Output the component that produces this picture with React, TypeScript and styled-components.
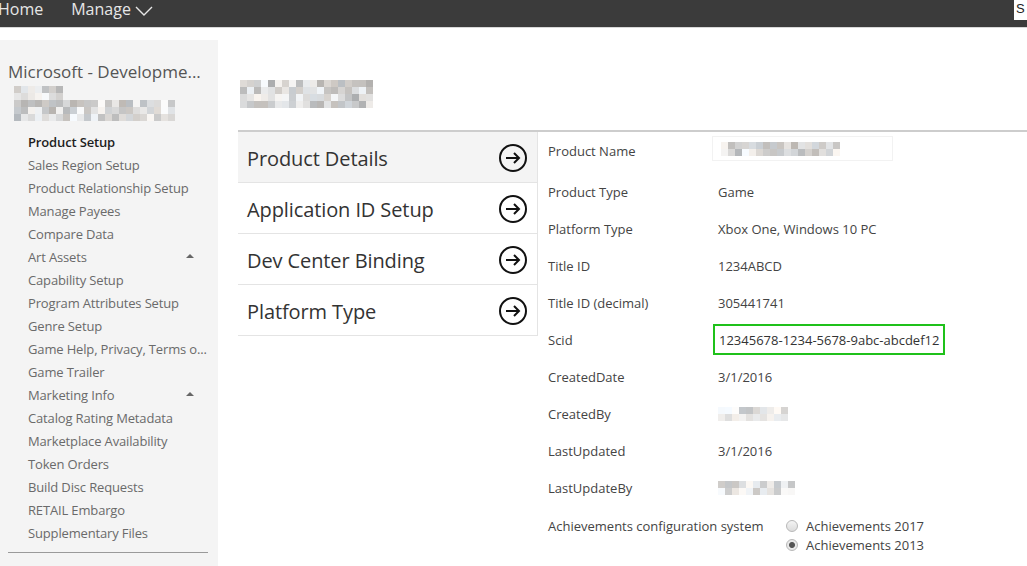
import styled, { createGlobalStyle } from "styled-components";

const GlobalStyle = createGlobalStyle`
    html, body {
        margin: 0;
        padding: 0;
        background: #ffffff;
        font-family: "Open Sans", "Noto Sans", sans-serif;
        overflow: hidden;
    }
    * {
        box-sizing: border-box;
    }
`;

const navItems: { label: string; active?: boolean; caret?: boolean }[] = [
    { label: "Product Setup", active: true },
    { label: "Sales Region Setup" },
    { label: "Product Relationship Setup" },
    { label: "Manage Payees" },
    { label: "Compare Data" },
    { label: "Art Assets", caret: true },
    { label: "Capability Setup" },
    { label: "Program Attributes Setup" },
    { label: "Genre Setup" },
    { label: "Game Help, Privacy, Terms o..." },
    { label: "Game Trailer" },
    { label: "Marketing Info", caret: true },
    { label: "Catalog Rating Metadata" },
    { label: "Marketplace Availability" },
    { label: "Token Orders" },
    { label: "Build Disc Requests" },
    { label: "RETAIL Embargo" },
    { label: "Supplementary Files" },
];

const tabs = ["Product Details", "Application ID Setup", "Dev Center Binding", "Platform Type"];

const Page = styled.div`
    width: 1027px;
    height: 566px;
    display: flex;
    flex-direction: column;
`;

const TopBar = styled.div`
    height: 28px;
    flex: none;
    background-color: #3b3b3b;
    border-bottom: 1px solid #d8d8d8;
    display: flex;
    align-items: flex-start;
`;

const TopLink = styled.span<{ $offset: number }>`
    font-size: 16px;
    line-height: 18px;
    color: #e6e6e6;
    display: flex;
    align-items: center;
    column-gap: 4px;
    margin-left: ${(p) => p.$offset}px;
`;

const SearchBox = styled.div`
    margin-left: auto;
    width: 13px;
    height: 20px;
    background-color: #ffffff;
    font-family: "Liberation Sans", sans-serif;
    font-size: 13px;
    line-height: 18px;
    padding-left: 2px;
    color: #222;
    overflow: hidden;
`;

const Body = styled.div`
    flex: 1;
    display: flex;
    padding-top: 12px;
`;

const Sidebar = styled.nav`
    width: 218px;
    flex: none;
    background-color: #f4f4f4;
    padding: 20px 0 0 8px;
    display: flex;
    flex-direction: column;
`;

const AccountName = styled.div`
    font-size: 17px;
    line-height: 24px;
    color: #555;
    white-space: nowrap;
`;

const AccountMeta = styled.div`
    display: flex;
    flex-direction: column;
    padding: 2px 0 9px 6px;
`;

const NavList = styled.ul`
    list-style: none;
    margin: 0;
    padding: 0 0 0 20px;
    display: flex;
    flex-direction: column;
`;

const NavItem = styled.li<{ $active?: boolean }>`
    height: 23px;
    display: flex;
    align-items: center;
    font-size: 13px;
    letter-spacing: -0.15px;
    color: ${(p) => (p.$active ? "#1e1e1e" : "#6a6a6a")};
    font-weight: ${(p) => (p.$active ? 600 : 400)};
    white-space: nowrap;
    padding-right: 24px;
    position: relative;
`;

const Caret = styled.span`
    position: absolute;
    right: 24px;
    top: 9px;
    width: 0;
    height: 0;
    border-left: 4px solid transparent;
    border-right: 4px solid transparent;
    border-bottom: 4px solid #666;
`;

const SidebarRule = styled.hr`
    width: 200px;
    margin: 8px 0 0 0;
    border: none;
    border-top: 1px solid #9a9a9a;
`;

const Main = styled.main`
    flex: 1;
    padding: 30px 0 0 20px;
    display: flex;
    flex-direction: column;
`;

const TitleRow = styled.div`
    height: 60px;
    padding: 10px 0 0 2px;
`;

const Content = styled.div`
    border-top: 2px solid #cdcdcd;
    display: flex;
    align-items: flex-start;
`;

const TabList = styled.div`
    width: 300px;
    flex: none;
    border-right: 1px solid #e4e4e4;
    display: flex;
    flex-direction: column;
`;

const Tab = styled.div<{ $selected?: boolean }>`
    height: 51px;
    display: flex;
    align-items: center;
    justify-content: space-between;
    padding: 2px 9px 0 9px;
    background-color: ${(p) => (p.$selected ? "#f4f4f4" : "#ffffff")};
    border-bottom: 1px solid #e4e4e4;
    font-size: 20px;
    letter-spacing: -0.1px;
    color: #333;
`;

const Details = styled.div`
    flex: 1;
    display: flex;
    flex-direction: column;
    padding: 4px 0 0 10px;
`;

const Row = styled.div<{ $height?: number }>`
    height: ${(p) => p.$height ?? 37}px;
    display: flex;
    align-items: ${(p) => (p.$height ? "flex-start" : "center")};
    font-size: 13px;
    color: #444;
`;

const Label = styled.div<{ $top?: number }>`
    width: 164px;
    flex: none;
    white-space: nowrap;
    padding-top: ${(p) => p.$top ?? 0}px;
`;

const Value = styled.div`
    padding-left: 6px;
    white-space: nowrap;
`;

const NameInput = styled.div`
    width: 181px;
    height: 25px;
    border: 1px solid #f2f2f2;
    display: flex;
    align-items: center;
    padding-left: 8px;
`;

const ScidBox = styled.div`
    margin-left: 1px;
    height: 31px;
    border: 2px solid #1fc11a;
    display: flex;
    align-items: center;
    padding: 0 4px;
    color: #333;
`;

const RadioGroup = styled.div`
    display: flex;
    flex-direction: column;
    padding-left: 74px;
    margin-top: 10px;
`;

const RadioOption = styled.label`
    display: flex;
    align-items: center;
    column-gap: 8px;
    height: 19px;
    color: #444;
`;

const RadioDot = styled.span<{ $checked?: boolean }>`
    width: 12px;
    height: 12px;
    border-radius: 50%;
    border: 1px solid #b8b8b8;
    background: ${(p) =>
        p.$checked
            ? "radial-gradient(circle, #555 0 2.5px, #e8e8e8 3.5px)"
            : "linear-gradient(#f4f4f4, #dcdcdc)"};
`;

const MosaicGrid = styled.div<{ $cols: number; $cell: number }>`
    display: grid;
    grid-template-columns: repeat(${(p) => p.$cols}, ${(p) => p.$cell}px);
    grid-auto-rows: ${(p) => p.$cell}px;
`;

function Mosaic({ cols, rows, cell, seed, dark = 0.3 }: { cols: number; rows: number; cell: number; seed: number; dark?: number }) {
    let s = seed;
    const rand = () => {
        s = (s * 9301 + 49297) % 233280;
        return s / 233280;
    };
    const cells = [];
    for (let i = 0; i < cols * rows; i++) {
        const r = rand();
        const v = Math.round(255 - (r * dark + 0.02) * 160);
        const tint = Math.round((rand() - 0.5) * 10);
        cells.push(
            <span key={i} style={{ background: `rgb(${v + tint}, ${v}, ${v - tint})` }} />
        );
    }
    return (
        <MosaicGrid $cols={cols} $cell={cell}>
            {cells}
        </MosaicGrid>
    );
}

function Chevron() {
    return (
        <svg width="18" height="10" viewBox="0 0 18 10" style={{ marginTop: 4 }}>
            <polyline points="1,1 9,9 17,1" fill="none" stroke="#e6e6e6" strokeWidth="1.4" />
        </svg>
    );
}

function ArrowCircle() {
    return (
        <svg width="30" height="30" viewBox="0 0 30 30">
            <circle cx="15" cy="15" r="13" fill="none" stroke="#111" strokeWidth="2" />
            <path d="M8 15 H21 M16 10 L21 15 L16 20" fill="none" stroke="#111" strokeWidth="2" />
        </svg>
    );
}

export default function App() {
    return (
        <Page>
            <GlobalStyle />
            <TopBar>
                <TopLink $offset={-2}>Home</TopLink>
                <TopLink $offset={28}>
                    Manage <Chevron />
                </TopLink>
                <SearchBox>S</SearchBox>
            </TopBar>
            <Body>
                <Sidebar>
                    <AccountName>Microsoft - Developme...</AccountName>
                    <AccountMeta>
                        <Mosaic cols={7} rows={2} cell={7} seed={11} dark={0.45} />
                        <Mosaic cols={23} rows={3} cell={7} seed={37} dark={0.45} />
                    </AccountMeta>
                    <NavList>
                        {navItems.map((item) => (
                            <NavItem key={item.label} $active={item.active}>
                                {item.label}
                                {item.caret ? <Caret /> : null}
                            </NavItem>
                        ))}
                    </NavList>
                    <SidebarRule />
                </Sidebar>
                <Main>
                    <TitleRow>
                        <Mosaic cols={19} rows={4} cell={7} seed={5} dark={0.5} />
                    </TitleRow>
                    <Content>
                        <TabList>
                            {tabs.map((tab, i) => (
                                <Tab key={tab} $selected={i === 0}>
                                    {tab}
                                    <ArrowCircle />
                                </Tab>
                            ))}
                        </TabList>
                        <Details>
                            <Row $height={37}>
                                <Label $top={6}>Product Name</Label>
                                <NameInput>
                                    <Mosaic cols={17} rows={2} cell={7} seed={23} dark={0.45} />
                                </NameInput>
                            </Row>
                            <Row>
                                <Label>Product Type</Label>
                                <Value>Game</Value>
                            </Row>
                            <Row>
                                <Label>Platform Type</Label>
                                <Value>Xbox One, Windows 10 PC</Value>
                            </Row>
                            <Row>
                                <Label>Title ID</Label>
                                <Value>1234ABCD</Value>
                            </Row>
                            <Row>
                                <Label>Title ID (decimal)</Label>
                                <Value>305441741</Value>
                            </Row>
                            <Row>
                                <Label>Scid</Label>
                                <ScidBox>12345678-1234-5678-9abc-abcdef12</ScidBox>
                            </Row>
                            <Row>
                                <Label>CreatedDate</Label>
                                <Value>3/1/2016</Value>
                            </Row>
                            <Row>
                                <Label>CreatedBy</Label>
                                <Value>
                                    <Mosaic cols={10} rows={2} cell={7} seed={71} dark={0.35} />
                                </Value>
                            </Row>
                            <Row>
                                <Label>LastUpdated</Label>
                                <Value>3/1/2016</Value>
                            </Row>
                            <Row>
                                <Label>LastUpdateBy</Label>
                                <Value>
                                    <Mosaic cols={11} rows={2} cell={7} seed={91} dark={0.35} />
                                </Value>
                            </Row>
                            <Row $height={56}>
                                <Label $top={11}>Achievements configuration system</Label>
                                <RadioGroup>
                                    <RadioOption>
                                        <RadioDot />
                                        Achievements 2017
                                    </RadioOption>
                                    <RadioOption>
                                        <RadioDot $checked />
                                        Achievements 2013
                                    </RadioOption>
                                </RadioGroup>
                            </Row>
                        </Details>
                    </Content>
                </Main>
            </Body>
        </Page>
    );
}
